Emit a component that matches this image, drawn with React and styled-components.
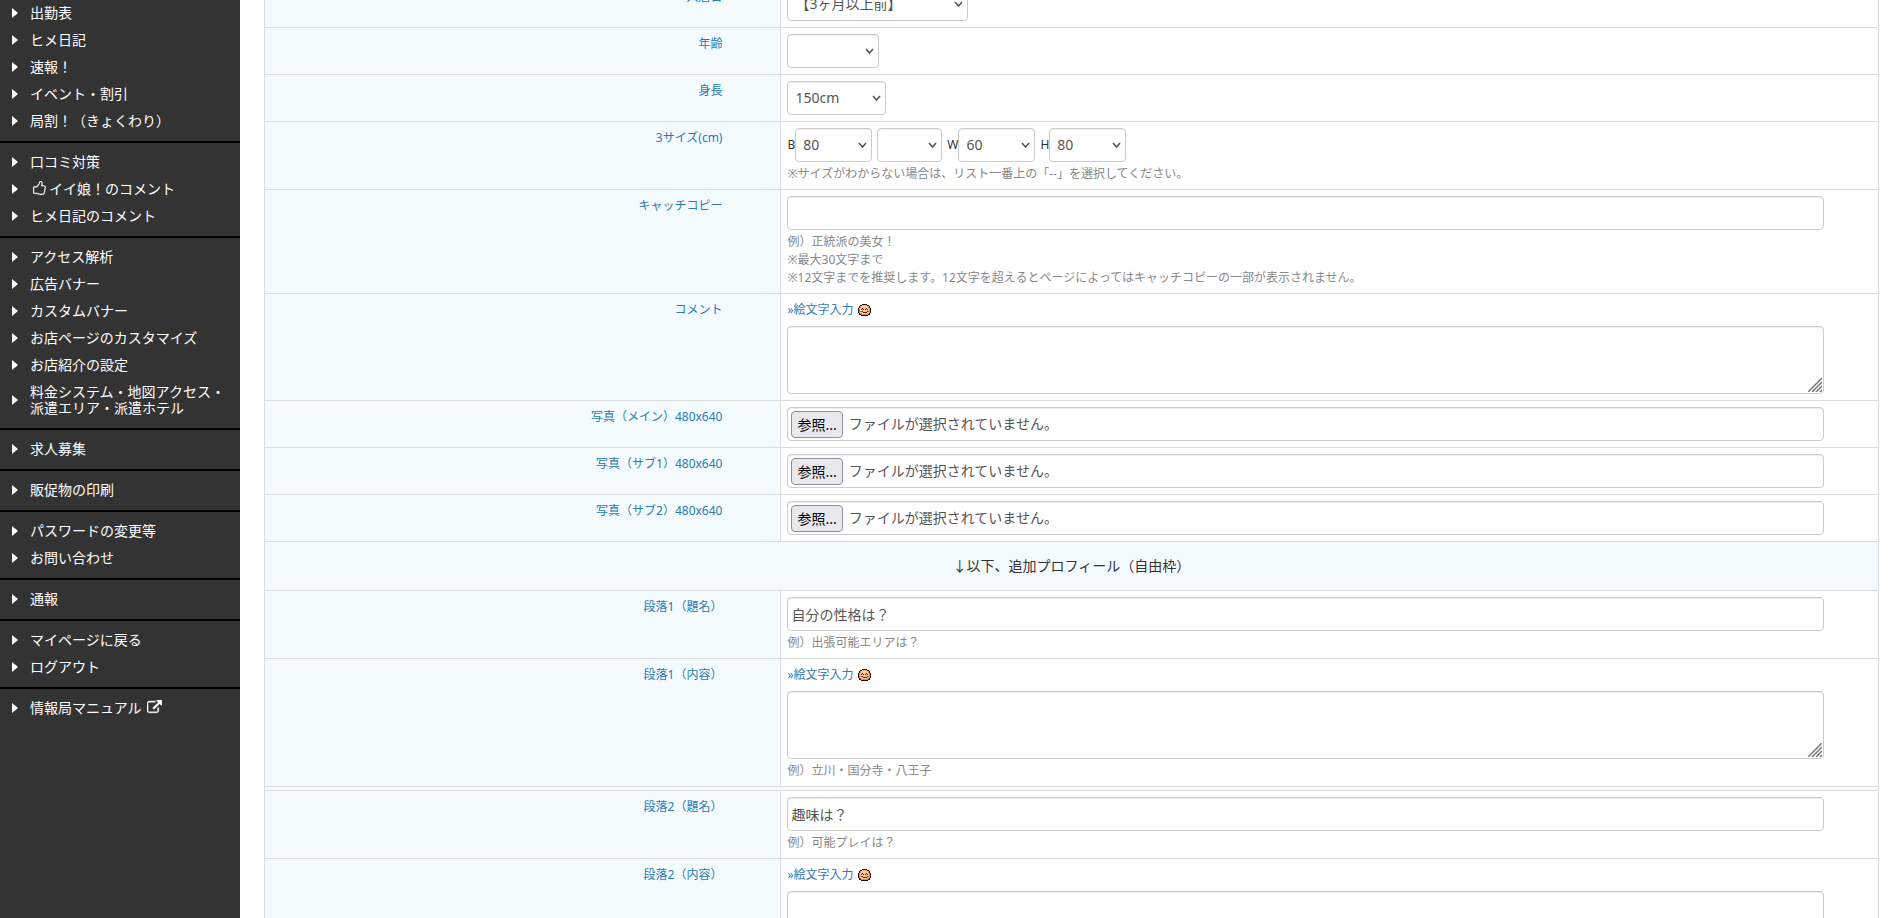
import { useState } from "react";
import styled, { createGlobalStyle } from "styled-components";

const GlobalStyle = createGlobalStyle`
* {
    box-sizing: border-box;
}
body {
    margin: 0;
    background: #fff;
    color: #333;
    font-family: "Noto Sans", "Noto Sans CJK JP", sans-serif;
    font-size: 12px;
    line-height: 18px;
}
`;

const Container = styled.div`
display: flex;
height: 100vh;
overflow: hidden;
`;

const Sidebar = styled.nav`
flex: none;
width: 240px;
background: #333;
`;

const Menu = styled.ul`
list-style: none;
margin: 0;
padding: 6px 0;
border-bottom: 2px solid #000;

&:first-child {
    padding-top: 0;
}
&:last-child {
    border-bottom: 0;
}
`;

const MenuLink = styled.a`
display: flex;
align-items: center;
padding: 5px 10px 6px 12px;
color: #fff;
font-size: 14px;
line-height: 16px;
text-decoration: none;
`;

const Caret = styled.svg`
flex: none;
width: 6px;
height: 10px;
margin-right: 12px;
fill: #fff;
`;

const MenuIcon = styled.svg`
width: 15px;
height: 15px;
margin: 0 2px;
vertical-align: -2px;
fill: #fff;
`;

const Main = styled.main`
flex: 1;
margin-top: -20px;
padding: 0 24px;
`;

const Table = styled.table`
width: 100%;
border-collapse: collapse;
table-layout: fixed;
`;

const Heading = styled.th`
width: 32%;
padding: 7px 58px 6px 6px;
border: 1px solid #ddd;
background: #f3fbff;
color: #2a7ab5;
font-weight: normal;
text-align: right;
vertical-align: top;
`;

const Cell = styled.td`
padding: 6px;
border: 1px solid #ddd;
vertical-align: top;
`;

const SectionTitle = styled.th`
padding: 15px 6px;
border: 1px solid #ddd;
background: #f3fbff;
font-size: 14px;
font-weight: normal;
text-align: center;
`;

const Spacer = styled.td`
height: 4px;
padding: 0;
border: 1px solid #ddd;
background: #f3fbff;
`;

const Field = styled.div`
position: relative;
display: flex;
width: calc(100% - 48px);
`;

const Input = styled.input`
width: 100%;
height: 34px;
padding: 3px;
border: 1px solid #ccc;
border-radius: 4px;
background: #fff;
box-shadow: inset 0 1px 1px rgba(0, 0, 0, 0.075);
color: #555;
font: inherit;
font-size: 14px;
`;

const TextArea = styled.textarea`
width: 100%;
height: 68px;
padding: 3px;
border: 1px solid #ccc;
border-radius: 4px;
box-shadow: inset 0 1px 1px rgba(0, 0, 0, 0.075);
color: #555;
font: inherit;
font-size: 14px;
resize: none;
`;

const Grip = styled.svg`
position: absolute;
right: 2px;
bottom: 2px;
width: 14px;
height: 14px;
stroke: #777;
pointer-events: none;
`;

const SelectWrap = styled.span`
position: relative;
display: inline-flex;
width: ${(props) => props.$width}px;
`;

const Select = styled.select`
appearance: none;
width: 100%;
height: 34px;
padding: 0 20px 0 7px;
border: 1px solid #ccc;
border-radius: 4px;
background: #fff;
box-shadow: inset 0 1px 1px rgba(0, 0, 0, 0.075);
color: #555;
font: inherit;
font-size: 14px;
`;

const Chevron = styled.svg`
position: absolute;
right: 5px;
top: 14px;
width: 9px;
height: 7px;
fill: none;
stroke: #555;
stroke-width: 1.6;
pointer-events: none;
`;

const Sizes = styled.div`
display: flex;
align-items: center;
gap: 5px;
`;

const SizeItem = styled.div`
display: flex;
align-items: center;
`;

const FileBox = styled.label`
position: relative;
display: flex;
align-items: center;
gap: 6px;
width: 100%;
height: 34px;
padding: 3px;
border: 1px solid #ccc;
border-radius: 4px;
box-shadow: inset 0 1px 1px rgba(0, 0, 0, 0.075);
color: #555;
font-size: 14px;
`;

const FileInput = styled.input`
position: absolute;
inset: 0;
width: 100%;
opacity: 0;
`;

const FileButton = styled.span`
padding: 2px 5px;
border: 1px solid #8f8f9d;
border-radius: 4px;
background: #e9e9ed;
color: #000;
line-height: 21px;
`;

const Hint = styled.p`
margin: 3px 0 0;
color: #888;
`;

const EmojiLink = styled.a`
display: flex;
align-items: center;
gap: 4px;
padding-top: 1px;
margin-bottom: 7px;
color: #337ab7;
text-decoration: none;
`;

const menus = [
    ["出勤表", "ヒメ日記", "速報！", "イベント・割引", "局割！（きょくわり）"],
    ["口コミ対策", "イイ娘！のコメント", "ヒメ日記のコメント"],
    [
        "アクセス解析",
        "広告バナー",
        "カスタムバナー",
        "お店ページのカスタマイズ",
        "お店紹介の設定",
        "料金システム・地図アクセス・派遣エリア・派遣ホテル",
    ],
    ["求人募集"],
    ["販促物の印刷"],
    ["パスワードの変更等", "お問い合わせ"],
    ["通報"],
    ["マイページに戻る", "ログアウト"],
    ["情報局マニュアル"],
];

const ThumbIcon = () => (
    <MenuIcon viewBox="0 0 1792 1792" aria-hidden="true">
        <path d="M1536 768q0-51-39-89.500t-89-38.500h-352q0-58 48-159.500t48-160.500q0-98-32-145t-128-47q-26 26-38 85t-30.500 125.500-59.500 109.500q-22 23-77 91-4 5-23 30t-31.500 41-34.500 42.500-40 44-38.500 35.500-40 27-35.500 9h-288v640h288q13 0 31.500 3t33 6.500 38 11 35 11.500 35.500 12.500 29 10.500q211 73 342 73h121q192 0 192-167 0-26-5-56 30-16 47.500-52.500t17.500-73.500-18-69q53-50 53-119 0-25-10-55.500t-25-47.500q32-1 53.500-47t21.500-81zm128-1q0 89-49 163 9 33 9 69 0 77-38 144 3 21 3 43 0 101-60 178 1 139-85 219.500t-227 80.500h-129q-96 0-189.500-22.500t-216.500-65.500q-116-40-138-40h-288q-53 0-90.500-37.500t-37.500-90.500v-640q0-53 37.500-90.500t90.500-37.500h274q36-24 137-155 58-75 107-128 24-25 35.500-85.500t30.500-126.500 62-108q39-37 90-37 84 0 151 32.500t102 101.500 35 186q0 93-48 192h176q104 0 180 76t76 179z" />
    </MenuIcon>
);

const ExternalIcon = () => (
    <MenuIcon viewBox="0 0 1792 1792" aria-hidden="true">
        <path d="M1408 928v320q0 119-84.500 203.500t-203.500 84.500h-832q-119 0-203.500-84.500t-84.500-203.500v-832q0-119 84.500-203.500t203.500-84.500h704q14 0 23 9t9 23v64q0 14-9 23t-23 9h-704q-66 0-113 47t-47 113v832q0 66 47 113t113 47h832q66 0 113-47t47-113v-320q0-14 9-23t23-9h64q14 0 23 9t9 23zm384-864v512q0 26-19 45t-45 19-45-19l-176-176-652 652q-10 10-23 10t-23-10l-114-114q-10-10-10-23t10-23l652-652-176-176q-19-19-19-45t19-45 45-19h512q26 0 45 19t19 45z" stroke="#fff" strokeWidth="50" />
    </MenuIcon>
);

const Smile = () => (
    <svg width="13" height="12" viewBox="0 0 13 12" shapeRendering="crispEdges" aria-hidden="true">
        <path d="M4 0h5v1h2v1h1v2h1v5h-1v2h-2v1H3v-1H1V9H0V4h1V2h1V1h2z" fill="#1c0a04" />
        <path d="M4 1h5v1h2v2h1v5h-1v1h-1v1H3v-1H2V9H1V4h1V2h2z" fill="#f28b58" />
        <path d="M4 1h4v1h2v2h1v5H9v1H4V9H2V4h1V2h1z" fill="#fdcb96" />
        <path d="M2 7h2v1H2zM9 7h2v1H9z" fill="#ee5548" />
        <path d="M3 5h1V4h1v1h1v1H5V5H4v1H3zM7 5h1V4h1v1h1v1H9V5H8v1H7zM4 7h1v1h4V7h1v1H9v1H5V8H4z" fill="#4a1c0c" />
    </svg>
);

const MenuItem = ({ text }) => (
    <li>
        <MenuLink href="#">
            <Caret viewBox="0 0 6 10" aria-hidden="true"><path d="M0 0l6 5-6 5z" /></Caret>
            <span>
                {text.startsWith("イイ娘") && <ThumbIcon />}
                {text}
                {text === "情報局マニュアル" && <> <ExternalIcon /></>}
            </span>
        </MenuLink>
    </li>
);

const Dropdown = ({ id, label, width, value }) => (
    <SelectWrap $width={width}>
        <Select id={id} aria-label={label} defaultValue={value}>
            <option value={value}>{value}</option>
            <option value="--">--</option>
        </Select>
        <Chevron viewBox="0 0 9 7" aria-hidden="true"><path d="M1 1l3.500 4L8 1" /></Chevron>
    </SelectWrap>
);

const Row = ({ id, label, children }) => (
    <tr>
        <Heading scope="row"><label htmlFor={id}>{label}</label></Heading>
        <Cell>{children}</Cell>
    </tr>
);

const TextField = ({ id, value = "" }) => (
    <Field>
        <Input id={id} type="text" defaultValue={value} />
    </Field>
);

const CommentField = ({ id }) => (
    <>
        <EmojiLink href="#">»絵文字入力<Smile /></EmojiLink>
        <Field>
            <TextArea id={id} />
            <Grip viewBox="0 0 14 14" aria-hidden="true">
                <path d="M0 14L14 0M4 14L14 4M8 14l6-6M12 14l2-2" strokeWidth="1.500" />
            </Grip>
        </Field>
    </>
);

const FileField = ({ id }) => {
    const [name, setName] = useState("");

    return (
        <Field>
            <FileBox>
                <FileInput id={id} type="file" onChange={(e) => setName(e.target.files[0]?.name || "")} />
                <FileButton>参照...</FileButton>
                <span>{name || "ファイルが選択されていません。"}</span>
            </FileBox>
        </Field>
    );
};

const App = () => {
    return (
        <Container>
            <GlobalStyle />
            <Sidebar>
                {menus.map((items) => (
                    <Menu key={items[0]}>
                        {items.map((text) => <MenuItem key={text} text={text} />)}
                    </Menu>
                ))}
            </Sidebar>
            <Main>
                <Table>
                    <tbody>
                        <Row id="joined" label="入店日">
                            <Dropdown id="joined" width={181} value="【3ヶ月以上前】" />
                        </Row>
                        <Row id="age" label="年齢">
                            <Dropdown id="age" width={92} value="" />
                        </Row>
                        <Row id="height" label="身長">
                            <Dropdown id="height" width={99} value="150cm" />
                        </Row>
                        <Row id="bust" label="3サイズ(cm)">
                            <Sizes>
                                <SizeItem>B<Dropdown id="bust" width={77} value="80" /></SizeItem>
                                <Dropdown label="カップ" width={65} value="" />
                                <SizeItem>W<Dropdown label="W" width={77} value="60" /></SizeItem>
                                <SizeItem>H<Dropdown label="H" width={77} value="80" /></SizeItem>
                            </Sizes>
                            <Hint>※サイズがわからない場合は、リスト一番上の「--」を選択してください。</Hint>
                        </Row>
                        <Row id="catch" label="キャッチコピー">
                            <TextField id="catch" />
                            <Hint>
                                例）正統派の美女！<br />
                                ※最大30文字まで<br />
                                ※12文字までを推奨します。12文字を超えるとページによってはキャッチコピーの一部が表示されません。
                            </Hint>
                        </Row>
                        <Row id="comment" label="コメント">
                            <CommentField id="comment" />
                        </Row>
                        <Row id="photo-main" label="写真（メイン）480x640">
                            <FileField id="photo-main" />
                        </Row>
                        <Row id="photo-sub1" label="写真（サブ1）480x640">
                            <FileField id="photo-sub1" />
                        </Row>
                        <Row id="photo-sub2" label="写真（サブ2）480x640">
                            <FileField id="photo-sub2" />
                        </Row>
                        <tr>
                            <SectionTitle colSpan={2}>↓以下、追加プロフィール（自由枠）</SectionTitle>
                        </tr>
                        <Row id="title1" label="段落1（題名）">
                            <TextField id="title1" value="自分の性格は？" />
                            <Hint>例）出張可能エリアは？</Hint>
                        </Row>
                        <Row id="body1" label="段落1（内容）">
                            <CommentField id="body1" />
                            <Hint>例）立川・国分寺・八王子</Hint>
                        </Row>
                        <tr>
                            <Spacer colSpan={2} />
                        </tr>
                        <Row id="title2" label="段落2（題名）">
                            <TextField id="title2" value="趣味は？" />
                            <Hint>例）可能プレイは？</Hint>
                        </Row>
                        <Row id="body2" label="段落2（内容）">
                            <CommentField id="body2" />
                        </Row>
                    </tbody>
                </Table>
            </Main>
        </Container>
    );
};

export default App;
